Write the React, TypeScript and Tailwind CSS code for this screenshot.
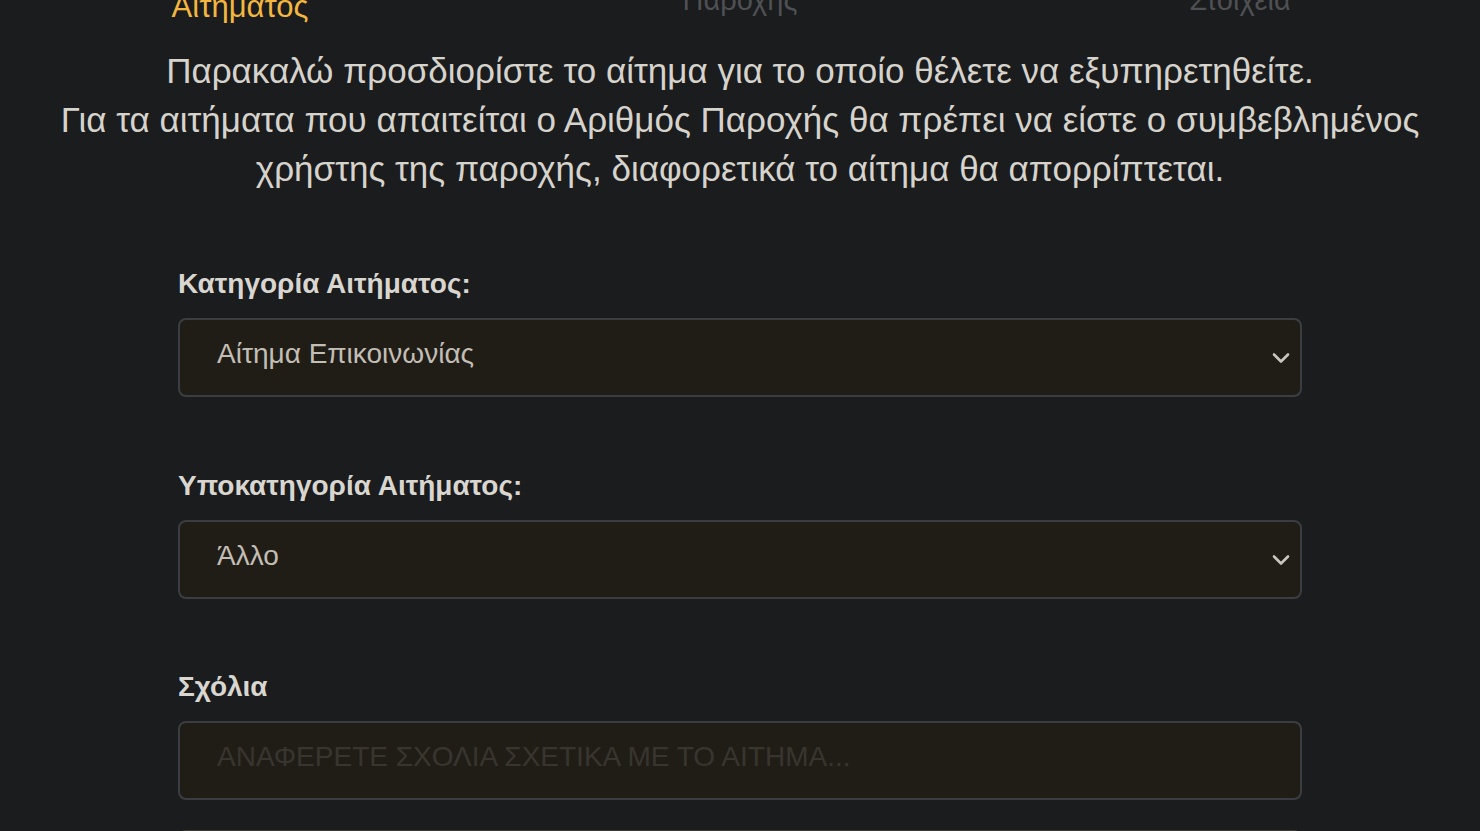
import { FC } from 'react';

const steps = [
  { label: 'Αιτήματος', active: true },
  { label: 'Παροχής', active: false },
  { label: 'Στοιχεία', active: false },
];

const Chevron: FC = () => (
  <svg width="18" height="12" viewBox="0 0 18 12" fill="none" className="shrink-0">
    <path d="M2 2.5 L9 9.5 L16 2.5" stroke="#c9c5bc" strokeWidth="2.6" strokeLinecap="round" strokeLinejoin="round" />
  </svg>
);

const SelectBox: FC<{ value: string }> = ({ value }) => (
  <div className="flex h-[79px] items-center justify-between rounded-lg border-2 border-[#3a3d41] bg-[#201d17] pl-[37px] pr-[10px]">
    <span className="mb-[7px] text-[28px] text-[#c3beb5]">{value}</span>
    <Chevron />
  </div>
);

const Field: FC<{ label: string; children: React.ReactNode; className?: string }> = ({ label, children, className }) => (
  <div className={className}>
    <div className="mb-[18px] text-[28px] font-bold leading-[33px] text-[#d9d6d0]">{label}</div>
    {children}
  </div>
);

const App: FC = () => {
  return (
    <div
      className="h-[831px] overflow-hidden bg-[#1b1c1e]"
      style={{ fontFamily: '"Liberation Sans", Arial, sans-serif' }}
    >
      <div className="-mt-[10px] flex h-[33px] items-start justify-center overflow-hidden">
        {steps.map((step) => (
          <div
            key={step.label}
            className={`w-[500px] shrink-0 text-center leading-[33px] ${
              step.active ? 'text-[31px] text-[#f3b740]' : '-mt-[6px] text-[29px] text-[#4e5053]'
            }`}
          >
            {step.label}
          </div>
        ))}
      </div>

      <p className="mt-[23px] text-center text-[35px] leading-[49px] text-[#d6d3cc]">
        <span className="block whitespace-nowrap">
          Παρακαλώ προσδιορίστε το αίτημα για το οποίο θέλετε να εξυπηρετηθείτε.
        </span>
        <span className="block whitespace-nowrap">
          Για τα αιτήματα που απαιτείται ο Αριθμός Παροχής θα πρέπει να είστε ο συμβεβλημένος
        </span>
        <span className="block whitespace-nowrap">
          χρήστης της παροχής, διαφορετικά το αίτημα θα απορρίπτεται.
        </span>
      </p>

      <div className="mx-auto mt-[74px] w-[1124px]">
        <Field label="Κατηγορία Αιτήματος:">
          <SelectBox value="Αίτημα Επικοινωνίας" />
        </Field>

        <Field label="Υποκατηγορία Αιτήματος:" className="mt-[72px]">
          <SelectBox value="Άλλο" />
        </Field>

        <Field label="Σχόλια" className="mt-[71px]">
          <input
            type="text"
            placeholder="ΑΝΑΦΕΡΕΤΕ ΣΧΟΛΙΑ ΣΧΕΤΙΚΑ ΜΕ ΤΟ ΑΙΤΗΜΑ..."
            className="block h-[79px] w-full rounded-lg border-2 border-[#3a3d41] bg-[#201d17] pb-[7px] pl-[37px] text-[28px] text-[#c3beb5] outline-none placeholder:text-[#38352f]"
          />
        </Field>

        <div className="mt-[30px] h-[79px] rounded-lg border-2 border-[#3d3b35] bg-[#201d17]" />
      </div>
    </div>
  );
};

export default App;
